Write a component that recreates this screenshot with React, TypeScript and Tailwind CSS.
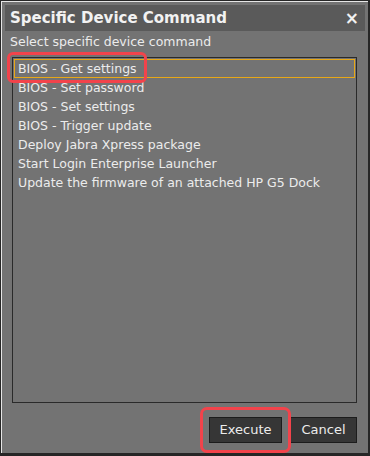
import React from 'react';

const items = [
  'BIOS - Get settings',
  'BIOS - Set password',
  'BIOS - Set settings',
  'BIOS - Trigger update',
  'Deploy Jabra Xpress package',
  'Start Login Enterprise Launcher',
  'Update the firmware of an attached HP G5 Dock',
];

export default function App() {
  return (
    <div className="w-[370px] h-[456px] bg-[#262626] pl-px pt-px pr-[2px] pb-[3px] font-['DejaVu_Sans',sans-serif]">
      <div className="relative flex h-full flex-col border-l border-t border-[#e6e6e6] bg-[#737373] px-[3px] pt-[3px]">
        <div className="flex h-[26px] items-center justify-between bg-[#5a5a5a] pl-[5px] pr-[6px]">
          <span className="text-[15px] font-bold text-[#f2f2f2]">Specific Device Command</span>
          <span className="text-[17px] font-bold leading-none text-[#f2f2f2]">×</span>
        </div>

        <div className="px-[5px] pt-[2px] text-[12.5px] text-[#ececec]">Select specific device command</div>

        <div className="ml-[7px] mr-[8px] mt-[5px] h-[346px] border border-[#2a2a2a] p-px">
          {items.map((item, i) => (
            <div
              key={item}
              className={`h-[19px] pl-[3px] text-[12.5px] leading-[17px] text-[#ececec] ${
                i === 0 ? 'border border-[#e8a817]' : 'border border-transparent'
              }`}
            >
              {item}
            </div>
          ))}
        </div>

        <div className="flex justify-end gap-[8px] pr-[8px] pt-[14px]">
          <button className="h-[26px] w-[73px] border border-[#1c1c1c] bg-[#363636] text-[13px] text-[#ececec]">
            Execute
          </button>
          <button className="h-[26px] w-[67px] border border-[#1c1c1c] bg-[#363636] text-[13px] text-[#ececec]">
            Cancel
          </button>
        </div>

        <div className="absolute left-[5px] top-[50px] h-[31px] w-[140px] rounded-[6px] border-[3px] border-[#f2434b]" />
        <div className="absolute left-[198px] top-[405px] h-[46px] w-[91px] rounded-[7px] border-[3px] border-[#f2434b]" />
      </div>
    </div>
  );
}
